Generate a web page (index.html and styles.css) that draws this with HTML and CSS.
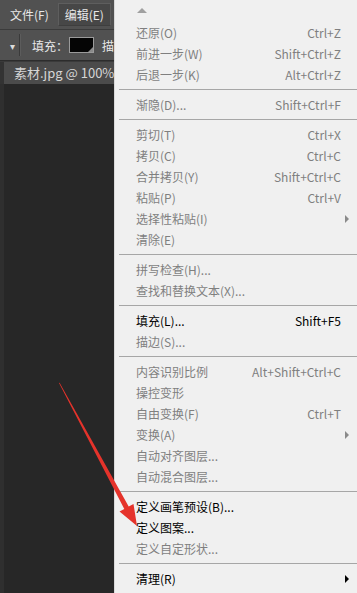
FILE: index.html
```html
<!DOCTYPE html>
<html lang="zh-CN">
<head>
    <meta charset="UTF-8">
    <title>编辑菜单</title>
    <link rel="stylesheet" href="styles.css">
</head>
<body>
    <div class="app">
        <div class="menubar">
            <span class="menubar-item">文件(F)</span>
            <span class="menubar-item open">编辑(E)</span>
        </div>
        <div class="optionsbar">
            <span class="dropdown">&#9662;</span>
            <span class="divider"></span>
            <span class="opt-label">填充：</span>
            <span class="swatch"></span>
            <span class="opt-label">描</span>
        </div>
        <div class="tabs">
            <span class="tab">素材.jpg @ 100%(</span>
        </div>
        <div class="canvas"></div>
    </div>

    <div class="menu">
        <div class="scroll-up"><span class="up-arrow"></span></div>
        <div class="item"><span>还原(O)</span><span>Ctrl+Z</span></div>
        <div class="item"><span>前进一步(W)</span><span>Shift+Ctrl+Z</span></div>
        <div class="item"><span>后退一步(K)</span><span>Alt+Ctrl+Z</span></div>
        <div class="sep"></div>
        <div class="item"><span>渐隐(D)...</span><span>Shift+Ctrl+F</span></div>
        <div class="sep"></div>
        <div class="item"><span>剪切(T)</span><span>Ctrl+X</span></div>
        <div class="item"><span>拷贝(C)</span><span>Ctrl+C</span></div>
        <div class="item"><span>合并拷贝(Y)</span><span>Shift+Ctrl+C</span></div>
        <div class="item"><span>粘贴(P)</span><span>Ctrl+V</span></div>
        <div class="item"><span>选择性粘贴(I)</span><span class="sub"></span></div>
        <div class="item"><span>清除(E)</span></div>
        <div class="sep"></div>
        <div class="item"><span>拼写检查(H)...</span></div>
        <div class="item"><span>查找和替换文本(X)...</span></div>
        <div class="sep"></div>
        <div class="item on"><span>填充(L)...</span><span>Shift+F5</span></div>
        <div class="item"><span>描边(S)...</span></div>
        <div class="sep"></div>
        <div class="item"><span>内容识别比例</span><span>Alt+Shift+Ctrl+C</span></div>
        <div class="item"><span>操控变形</span></div>
        <div class="item"><span>自由变换(F)</span><span>Ctrl+T</span></div>
        <div class="item"><span>变换(A)</span><span class="sub"></span></div>
        <div class="item"><span>自动对齐图层...</span></div>
        <div class="item"><span>自动混合图层...</span></div>
        <div class="sep"></div>
        <div class="item on"><span>定义画笔预设(B)...</span></div>
        <div class="item on"><span>定义图案...</span></div>
        <div class="item"><span>定义自定形状...</span></div>
        <div class="sep"></div>
        <div class="item on"><span>清理(R)</span><span class="sub"></span></div>
        <div class="sep"></div>
    </div>

    <svg class="pointer" width="357" height="593" viewBox="0 0 357 593">
        <polygon points="59,383 59.6,382.7 128.7,506.5 133.5,503.9 137,526 119.5,511.5 124.3,508.9" fill="#e5332b"/>
    </svg>
</body>
</html>
```

FILE: styles.css
```css
html, body {
    margin: 0;
    padding: 0;
}
body {
    width: 357px;
    height: 593px;
    overflow: hidden;
    position: relative;
    font-family: "Noto Sans CJK SC", "Liberation Sans", sans-serif;
    font-size: 12px;
    background: #282828;
}
.app {
    display: flex;
    flex-direction: column;
    width: 114px;
    height: 100%;
    overflow: hidden;
}
.menubar {
    height: 29px;
    background: #515151;
    border-bottom: 1px solid #3b3b3b;
    display: flex;
    align-items: center;
    padding-left: 4px;
    color: #e8e8e8;
}
.menubar-item {
    padding: 2px 6px;
    margin-right: 3px;
    line-height: 17px;
    white-space: nowrap;
}
.menubar-item.open {
    background: #474747;
    border: 1px solid #5e5e5e;
    border-bottom-color: #3e3e3e;
}
.optionsbar {
    height: 30px;
    background: #515151;
    border-bottom: 1px solid #2c2c2c;
    display: flex;
    align-items: center;
    color: #e8e8e8;
    padding-left: 10px;
    white-space: nowrap;
}
.dropdown {
    font-size: 10px;
    color: #dcdcdc;
    width: 9px;
}
.divider {
    width: 1px;
    height: 22px;
    background: #3a3a3a;
    border-right: 1px solid #5c5c5c;
    margin: 0 11px 0 4px;
    flex-shrink: 0;
}
.opt-label {
    font-size: 12px;
}
.swatch {
    width: 23px;
    height: 14px;
    flex-shrink: 0;
    background: #050505;
    border: 1px solid #9a9a9a;
    margin: 0 8px 0 1px;
    position: relative;
}
.swatch::after {
    content: "";
    position: absolute;
    right: 0;
    bottom: 0;
    border-left: 5px solid transparent;
    border-bottom: 5px solid #8a8a8a;
}
.tabs {
    height: 22px;
    background: #333333;
    border-top: 1px solid #3a3a3a;
    padding-left: 4px;
    display: flex;
}
.tab {
    background: #4b4b4b;
    color: #d6d6d6;
    padding-left: 10px;
    line-height: 22px;
    font-size: 13px;
    flex: 1;
    white-space: nowrap;
    overflow: hidden;
}
.canvas {
    flex: 1;
    background: #272727;
    border-left: 4px solid #2f2f2f;
}

.menu {
    position: absolute;
    left: 114px;
    top: 0;
    right: 0;
    background: #f0f0f0;
    border-left: 1px solid #d9d9d9;
    color: #7f7f7f;
}
.scroll-up {
    height: 22px;
    display: flex;
    align-items: center;
    padding-left: 22px;
}
.up-arrow {
    width: 0;
    height: 0;
    border-left: 5px solid transparent;
    border-right: 5px solid transparent;
    border-bottom: 5px solid #a0a0a0;
    margin-top: -2px;
}
.item {
    height: 21px;
    display: flex;
    align-items: center;
    justify-content: space-between;
    padding: 0 16px 0 21px;
    white-space: nowrap;
}
.item.on {
    color: #000000;
}
.sep {
    height: 4px;
    margin: 4px 0 0 4px;
    border-top: 1px solid #a6a6a6;
}
.sub {
    width: 0;
    height: 0;
    border-top: 4px solid transparent;
    border-bottom: 4px solid transparent;
    border-left: 4px solid #8a8a8a;
    margin-right: -8px;
}
.item.on .sub {
    border-left-color: #000000;
}
.pointer {
    position: absolute;
    left: 0;
    top: 0;
    pointer-events: none;
}
```
